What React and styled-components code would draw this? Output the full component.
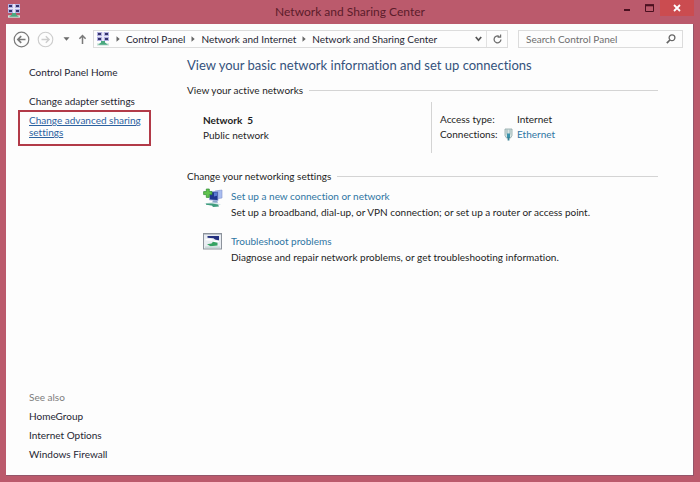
import styled, { createGlobalStyle } from "styled-components"

const GlobalStyle = createGlobalStyle`
  * {
    box-sizing: border-box;
  }

  body {
    margin: 0;
    font-family: Lato, "Open Sans", sans-serif;
    font-size: 10px;
    line-height: 12px;
    font-variant-ligatures: none;
    color: #1e1e1e;
  }

  button {
    padding: 0;
    border: none;
    background: transparent;
    font: inherit;
    color: inherit;
    cursor: pointer;
  }

  svg {
    display: block;
    flex: none;
  }
`

const Window = styled.div`
  display: flex;
  flex-direction: column;
  min-height: 100vh;
  padding: 0 6px 6px;
  background: #bb5a6c;
`

const TitleBar = styled.header`
  display: grid;
  grid-template-columns: 100px 1fr 100px;
  height: 24px;
`

const TitleIcon = styled.div`
  padding: 4px 0 0 1px;
`

const Title = styled.h1`
  margin: 0;
  font-size: 12px;
  font-weight: 400;
  line-height: 24px;
  text-align: center;
  white-space: nowrap;
  color: #5b1c2b;
`

const WindowControls = styled.div`
  display: flex;
  justify-content: flex-end;
`

const WindowButton = styled.button`
  display: flex;
  align-items: center;
  justify-content: center;
  width: ${(props) => (props.$close ? "34px" : "22px")};
  height: 16px;
  color: ${(props) => (props.$close ? "#ffffff" : "#4a1020")};
  background: ${(props) => (props.$close ? "#cb4c50" : "transparent")};
`

const Client = styled.div`
  display: flex;
  flex-direction: column;
  flex: 1;
  background: #fdfdfd;
  border-bottom: 1px solid #94566a;
  border-right: 1px solid #94566a;
`

const Toolbar = styled.div`
  display: flex;
  align-items: center;
  padding: 6px 10px 6px 7px;
`

const NavButtons = styled.div`
  display: flex;
  align-items: center;
  gap: 7px;
  width: 80px;
`

const RecentButton = styled.button`
  display: flex;
  justify-content: center;
  width: 10px;
`

const AddressBar = styled.nav`
  display: flex;
  align-items: center;
  flex: 1;
  height: 18px;
  padding-left: 2px;
  border: 1px solid #dcdcdc;
`

const Crumbs = styled.ol`
  display: flex;
  align-items: center;
  flex: 1;
  margin: 0;
  padding: 0;
  list-style: none;
`

const Crumb = styled.li`
  display: flex;
  align-items: center;
  white-space: nowrap;

  svg {
    margin: 0 6px;
  }
`

const PlainLink = styled.a`
  color: #1f2633;
  text-decoration: none;
`

const AddressButton = styled.button`
  display: flex;
  align-items: center;
  justify-content: center;
  width: ${(props) => (props.$divided ? "21px" : "16px")};
  height: 16px;
  border-left: ${(props) => (props.$divided ? "1px solid #e2e2e2" : "none")};
`

const SearchBox = styled.label`
  display: flex;
  align-items: center;
  width: 165px;
  height: 18px;
  margin-left: 10px;
  padding: 0 6px 0 7px;
  border: 1px solid #dcdcdc;
`

const SearchInput = styled.input`
  flex: 1;
  min-width: 0;
  padding: 0;
  border: none;
  outline: none;
  background: transparent;
  font: inherit;

  &::placeholder {
    color: #6d6d6d;
    opacity: 1;
  }
`

const Body = styled.div`
  display: grid;
  grid-template-columns: 181px 1fr;
  flex: 1;
`

const Sidebar = styled.aside`
  display: flex;
  flex-direction: column;
  justify-content: space-between;
  padding: 12px 36px 15px 12px;
`

const SideList = styled.ul`
  margin: 0;
  padding: 0;
  list-style: none;
`

const SideItem = styled.li`
  padding-left: 11px;
  margin-bottom: ${(props) => (props.$home ? "17px" : "0")};
`

const TaskHighlight = styled.li`
  margin-top: 3px;
  padding: 2px 0 6px 9px;
  border: 2px solid #b23a48;
`

const ActiveLink = styled.a`
  color: #2c62a0;
  text-decoration: underline;
`

const SeeAlso = styled.section`
  padding-left: 11px;
`

const SeeAlsoTitle = styled.h2`
  margin: 0 0 7px;
  font-size: 10px;
  font-weight: 400;
  color: #7c7c7c;
`

const SeeAlsoList = styled(SideList)`
  display: grid;
  gap: 7px;
`

const Main = styled.main`
  padding: 2px 35px 20px 0;
`

const PageTitle = styled.h2`
  margin: 0;
  font-size: 13px;
  font-weight: 400;
  line-height: 18px;
  color: #34527c;
`

const SectionTitle = styled.h3`
  display: flex;
  align-items: center;
  gap: 6px;
  margin: 0;
  font-size: 10px;
  font-weight: 400;

  &::after {
    content: "";
    flex: 1;
    height: 1px;
    background: #d4d4d4;
  }
`

const ActiveNetworks = styled.section`
  margin-top: 10px;
`

const NetworkRow = styled.div`
  display: grid;
  grid-template-columns: 228px 1fr;
  margin-top: 6px;
  padding-left: 16px;
  line-height: 15px;
`

const NetworkName = styled.div`
  padding-top: 11px;
`

const NetworkDetails = styled.dl`
  display: grid;
  grid-template-columns: 64px 1fr;
  margin: 0;
  padding: 10px 0 11px 8px;
  border-left: 1px solid #d4d4d4;

  dd {
    display: flex;
    align-items: center;
    gap: 4px;
    margin: 0;
  }
`

const DetailText = styled.span`
  padding-left: 13px;
`

const TaskLink = styled.a`
  color: #2f76a3;
  text-decoration: none;
`

const Settings = styled.section`
  margin-top: 17px;
`

const Task = styled.article`
  display: grid;
  grid-template-columns: 28px 1fr;
  margin-top: ${(props) => (props.$first ? "6px" : "13px")};
  padding-left: 16px;
  line-height: 16px;

  p {
    margin: 0;
  }
`

const NetworkCenterIcon = () => (
  <svg width="14" height="15" viewBox="0 0 14 15">
    <path d="M1 0h12v9H1z" fill="#e6e6f8" />
    <path d="M1 0h5v4H1zM8 0h5v4H8zM1 5h5v4H1zM8 5h5v4H8z" fill="#b3b1e2" />
    <path d="M2 1h3v2H2zM9 1h3v2H9zM2 6h3v2H2zM9 6h3v2H9z" fill="#34336c" />
    <path d="M1 12.5h12" stroke="#cfe3dc" strokeWidth="2.4" />
    <path d="M5 9h4v1.5l3 2.2H2l3-2.2z" fill="#4aa980" />
  </svg>
)

const BackIcon = () => (
  <svg width="17" height="17" viewBox="0 0 17 17" fill="none" stroke="#7a7a7a">
    <circle cx="8.5" cy="8.5" r="7.3" strokeWidth="1.2" />
    <path d="M12.5 8.5H5M8.2 5.2L4.9 8.5l3.3 3.3" strokeWidth="1.7" />
  </svg>
)

const ForwardIcon = () => (
  <svg width="17" height="17" viewBox="0 0 17 17" fill="none" stroke="#cdcdcd">
    <circle cx="8.5" cy="8.5" r="7.3" strokeWidth="1.1" />
    <path d="M4.5 8.5H12M8.8 5.2l3.3 3.3-3.3 3.3" strokeWidth="1.4" />
  </svg>
)

const UpIcon = () => (
  <svg width="9" height="11" viewBox="0 0 9 11" fill="none" stroke="#7a7a7a" strokeWidth="1.5">
    <path d="M4.5 10V1.5M1.4 4.7l3.1-3.2 3.1 3.2" />
  </svg>
)

const CrumbArrow = () => (
  <svg width="4" height="6" viewBox="0 0 4 6">
    <path d="M0.5 0.3L3.7 3 0.5 5.7z" fill="#666" />
  </svg>
)

const PlugIcon = () => (
  <svg width="9" height="13" viewBox="0 0 9 13">
    <path d="M1 1h7v6.5L6.5 10h-4L1 7.5z" fill="#d9e6e4" stroke="#8aa3a5" strokeWidth="0.8" />
    <path d="M3 1.5v5M6 1.5v5" stroke="#8fa9ac" strokeWidth="0.8" />
    <path d="M3 5.5h3V10H3z" fill="#3b93ad" />
    <path d="M4.5 9v3.5" stroke="#3a8295" strokeWidth="1.8" />
  </svg>
)

const NewConnectionIcon = () => (
  <svg width="20" height="20" viewBox="0 0 20 20">
    <path d="M12 3l7-1v8l-7 1z" fill="#a9bdf0" stroke="#8393cf" strokeWidth="0.6" />
    <path d="M6.5 4l8.5-.6v9.2l-8.5-.8z" fill="#20368f" stroke="#9cabe0" strokeWidth="0.8" />
    <path d="M11 4.5l3-.2v3.5l-3 .7z" fill="#5a7ad2" />
    <path d="M10 12.4h4l1 2.4H9z" fill="#8aa6c9" />
    <path d="M1 15.5l8-1.2 9 2-6 2.7z" fill="#cfe4e6" />
    <path d="M3 15.4h6l6 1 1 2-6 .6-1-1.6-6-.6z" fill="#3e9c7c" />
    <path d="M3.3 1h3v2.6H9v3H6.3v2.8h-3V6.6H.6v-3h2.7z" fill="#62c44e" stroke="#2c8b30" strokeWidth="0.7" />
  </svg>
)

const TroubleshootIcon = () => (
  <svg width="19" height="17" viewBox="0 0 19 17">
    <rect x="0.5" y="0.5" width="18" height="15.5" fill="#e9edf2" stroke="#8d939c" />
    <path d="M1 1.5h17" stroke="#bfc5cf" />
    <path d="M4.5 3H16v4.5l-4-1-1.5-1.2-6-.6z" fill="#24307f" />
    <path d="M2.5 6.5l7 .5M10 8.3l6 .2" stroke="#ffffff" strokeWidth="1.4" />
    <path d="M4 11.2l4.5-.8L10 8.8l4.5 1v2.6l-7 .8z" fill="#35a262" />
    <path d="M2 14.2h15" stroke="#c9d9d8" strokeWidth="1.5" />
  </svg>
)

const crumbs = ["Control Panel", "Network and Internet", "Network and Sharing Center"]
const seeAlso = ["HomeGroup", "Internet Options", "Windows Firewall"]

const App = () => {
  return (
    <>
      <GlobalStyle />
      <Window>
        <TitleBar>
          <TitleIcon>
            <NetworkCenterIcon />
          </TitleIcon>
          <Title>Network and Sharing Center</Title>
          <WindowControls>
            <WindowButton aria-label="Minimize">
              <svg width="8" height="8" viewBox="0 0 8 8">
                <path d="M1 6h6" stroke="currentColor" strokeWidth="2" />
              </svg>
            </WindowButton>
            <WindowButton aria-label="Maximize">
              <svg width="9" height="8" viewBox="0 0 9 8" fill="none" stroke="currentColor">
                <path d="M0.5 1v6.5h8V1" />
                <path d="M0 1.2h9" strokeWidth="2.2" />
              </svg>
            </WindowButton>
            <WindowButton $close aria-label="Close">
              <svg width="8" height="8" viewBox="0 0 8 8">
                <path d="M1 1l6 6M7 1L1 7" stroke="currentColor" strokeWidth="1.8" />
              </svg>
            </WindowButton>
          </WindowControls>
        </TitleBar>

        <Client>
          <Toolbar>
            <NavButtons>
              <button aria-label="Back">
                <BackIcon />
              </button>
              <button aria-label="Forward">
                <ForwardIcon />
              </button>
              <RecentButton aria-label="Recent pages">
                <svg width="7" height="4" viewBox="0 0 7 4">
                  <path d="M0.5 0.3h6L3.5 3.7z" fill="#6a6a6a" />
                </svg>
              </RecentButton>
              <button aria-label="Up">
                <UpIcon />
              </button>
            </NavButtons>

            <AddressBar aria-label="Address">
              <NetworkCenterIcon />
              <Crumbs>
                {crumbs.map((name) => (
                  <Crumb key={name}>
                    <CrumbArrow />
                    <PlainLink href="#">{name}</PlainLink>
                  </Crumb>
                ))}
              </Crumbs>
              <AddressButton aria-label="Previous locations">
                <svg width="7" height="6" viewBox="0 0 7 6" fill="none">
                  <path d="M0.8 1L3.5 4.2 6.2 1" stroke="#555" strokeWidth="1.7" />
                </svg>
              </AddressButton>
              <AddressButton $divided aria-label="Refresh">
                <svg width="9" height="10" viewBox="0 0 9 10" fill="none" stroke="#707070">
                  <path d="M6.4 2.6A3.4 3.4 0 1 0 7.9 5.5" strokeWidth="1.3" />
                  <path d="M4.6 3.2h3V0.4" strokeWidth="1.2" />
                </svg>
              </AddressButton>
            </AddressBar>

            <SearchBox>
              <SearchInput type="search" placeholder="Search Control Panel" aria-label="Search Control Panel" />
              <svg width="10" height="10" viewBox="0 0 10 10" fill="none" stroke="#666">
                <circle cx="6" cy="3.8" r="2.9" strokeWidth="1.3" />
                <path d="M3.9 6L0.8 9.2" strokeWidth="1.7" />
              </svg>
            </SearchBox>
          </Toolbar>

          <Body>
            <Sidebar>
              <SideList>
                <SideItem $home>
                  <PlainLink href="#">Control Panel Home</PlainLink>
                </SideItem>
                <SideItem>
                  <PlainLink href="#">Change adapter settings</PlainLink>
                </SideItem>
                <TaskHighlight>
                  <ActiveLink href="#">Change advanced sharing settings</ActiveLink>
                </TaskHighlight>
              </SideList>

              <SeeAlso>
                <SeeAlsoTitle>See also</SeeAlsoTitle>
                <SeeAlsoList>
                  {seeAlso.map((name) => (
                    <li key={name}>
                      <PlainLink href="#">{name}</PlainLink>
                    </li>
                  ))}
                </SeeAlsoList>
              </SeeAlso>
            </Sidebar>

            <Main>
              <PageTitle>View your basic network information and set up connections</PageTitle>

              <ActiveNetworks>
                <SectionTitle>View your active networks</SectionTitle>
                <NetworkRow>
                  <NetworkName>
                    <strong>Network&nbsp; 5</strong>
                    <div>Public network</div>
                  </NetworkName>
                  <NetworkDetails>
                    <dt>Access type:</dt>
                    <dd>
                      <DetailText>Internet</DetailText>
                    </dd>
                    <dt>Connections:</dt>
                    <dd>
                      <PlugIcon />
                      <TaskLink href="#">Ethernet</TaskLink>
                    </dd>
                  </NetworkDetails>
                </NetworkRow>
              </ActiveNetworks>

              <Settings>
                <SectionTitle>Change your networking settings</SectionTitle>
                <Task $first>
                  <NewConnectionIcon />
                  <div>
                    <TaskLink href="#">Set up a new connection or network</TaskLink>
                    <p>Set up a broadband, dial-up, or VPN connection; or set up a router or access point.</p>
                  </div>
                </Task>
                <Task>
                  <TroubleshootIcon />
                  <div>
                    <TaskLink href="#">Troubleshoot problems</TaskLink>
                    <p>Diagnose and repair network problems, or get troubleshooting information.</p>
                  </div>
                </Task>
              </Settings>
            </Main>
          </Body>
        </Client>
      </Window>
    </>
  )
}

export default App
